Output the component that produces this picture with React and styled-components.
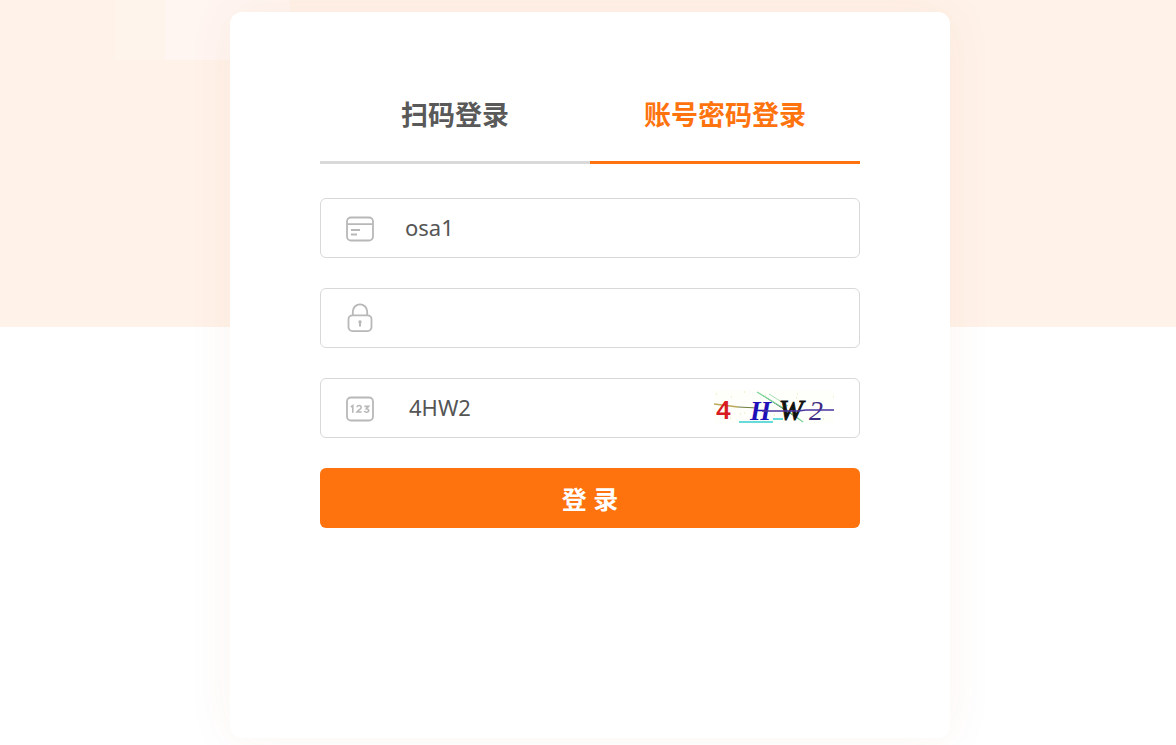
import React, { useState } from 'react';
import styled, { createGlobalStyle } from 'styled-components';

const GlobalStyle = createGlobalStyle`
  *, *::before, *::after { box-sizing: border-box; }
  body {
    margin: 0;
    background: #fff;
    color: #555;
    font-family: "Noto Sans", "Noto Sans CJK SC", sans-serif;
  }
  button, input { font-family: inherit; }
`;

const Page = styled.main`
  display: flex;
  justify-content: center;
  min-height: 100vh;
  padding: 12px 16px 7px 20px;
  overflow: hidden;
  background:
    linear-gradient(90deg, #fff4eb 50px, #fff5f1 50px) 115px 0 / 175px 60px no-repeat,
    linear-gradient(#fff2e9, #fff2e9) 0 0 / 100% 327px no-repeat;
`;

const Card = styled.section`
  width: 100%;
  max-width: 720px;
  min-height: 726px;
  padding: 56px 90px;
  border-radius: 12px;
  background: #fff;
  box-shadow: 0 0 50px rgba(190, 90, 30, 0.06);
`;

const Tabs = styled.div`
  display: flex;
  margin-bottom: 34px;
`;

const Tab = styled.button`
  flex: 1;
  height: 96px;
  padding: 0 0 2px;
  border: 0;
  border-bottom: 3px solid ${({ $active }) => ($active ? '#ff730f' : '#d9d9d9')};
  background: none;
  color: ${({ $active }) => ($active ? '#ff730f' : '#595959')};
  font-size: 27px;
  font-weight: 700;
  font-family: "Noto Sans CJK SC", sans-serif;
  line-height: 40px;
  cursor: pointer;
`;

const Form = styled.form`
  display: flex;
  flex-direction: column;
  gap: 30px;
`;

const Field = styled.label`
  display: flex;
  align-items: center;
  gap: 31px;
  height: 60px;
  padding: 0 25px;
  border: 1px solid #d9d9d9;
  border-radius: 6px;
  background: #fff;

  svg { flex: none; }
`;

const TextInput = styled.input`
  flex: 1;
  min-width: 0;
  height: 40px;
  padding: 0 0 2px ${({ $indent }) => $indent || 0}px;
  border: 0;
  outline: 0;
  background: transparent;
  color: #555;
  font-size: 22px;
`;

const CaptchaButton = styled.button`
  display: flex;
  padding: 0;
  border: 0;
  background: none;
  cursor: pointer;
`;

const Submit = styled.button`
  height: 60px;
  padding: 2px 0 0;
  border: 0;
  border-radius: 6px;
  background: #ff730f;
  color: #fff;
  font-size: 25px;
  font-weight: 700;
  line-height: 36px;
  cursor: pointer;
`;

const FieldIcon = ({ children }) => (
  <svg width="28" height="32" viewBox="0 0 28 32" fill="none" stroke="#b8b8b8" strokeWidth="1.8" aria-hidden="true">
    {children}
  </svg>
);

const CardIcon = () => (
  <FieldIcon>
    <rect x="1" y="5.5" width="26" height="23" rx="4" />
    <path d="M1 12.2h26M5 18h9M5 22.5h6" />
  </FieldIcon>
);

const LockIcon = () => (
  <FieldIcon>
    <rect x="2.5" y="13.3" width="23" height="15.8" rx="4" />
    <path d="M6.8 13.3V9.6a7.2 7.2 0 0 1 14.4 0v3.7" />
    <path d="M14 18.6v5.8" strokeWidth="2" />
    <path d="M12.4 19.8h3.2" strokeWidth="2" />
  </FieldIcon>
);

const CodeIcon = () => (
  <FieldIcon>
    <rect x="1" y="5.5" width="26" height="23" rx="4" />
    <path d="M4.8 15l2-1.4v7.2M11 15.2c.2-2.2 4.4-2.2 4.2.2 0 1.6-2.6 2.6-4.2 4.6h4.6M18.4 14.4h4.2l-2.2 2.4c3.2 0 2.8 3.4.2 3.4-1.2 0-2-.4-2.4-1.2" strokeWidth="1.6" />
  </FieldIcon>
);

const Captcha = () => (
  <svg width="120" height="40" viewBox="0 0 120 40" fontFamily="Liberation Serif, serif" role="img" aria-label="4HW2">
    <rect y="2" width="120" height="33" fill="#fefefa" />
    <path d="M2 6h1m14 3h1m12-5h1m20 3h1m8 20h1m22-21h1m-68 24h1m13-5h1m51-15h1m17 6h1m8 15h1m9-22h1m-94 17h1" stroke="#dfe8a8" strokeWidth="1" />
    <path d="M0 16l24 3" stroke="#bba858" strokeWidth="1.4" />
    <path d="M24 19l20 1" stroke="#6f7f3e" strokeWidth="1.2" />
    <path d="M43 4l31 19 15 11" stroke="#7bd69a" strokeWidth="1.2" />
    <path d="M55 6l19 12" stroke="#a6dfb4" strokeWidth="1" />
    <path d="M25 34h34M59 31h10" stroke="#35cfd2" strokeWidth="1.5" fill="none" />
    <text x="2" y="31" fontSize="26" fontFamily="Noto Sans, sans-serif" fontWeight="600" fill="#d81b22">4</text>
    <text x="36" y="32" fontSize="27" fontWeight="700" fontStyle="italic" fill="#1e10b8">H</text>
    <text x="65" y="32" fontSize="29" fontStyle="italic" fill="#111" stroke="#111" strokeWidth="1">W</text>
    <text x="95" y="32" fontSize="28" fontStyle="italic" fill="#3c2a82">2</text>
    <path d="M48 23h36l8-1h28" stroke="#4935a0" strokeWidth="1.6" fill="none" />
  </svg>
);

export default function App() {
  const [tab, setTab] = useState('account');
  return (
    <>
      <GlobalStyle />
      <Page>
        <Card>
          <Tabs role="tablist">
            <Tab type="button" role="tab" aria-selected={tab === 'scan'} $active={tab === 'scan'} onClick={() => setTab('scan')}>
              扫码登录
            </Tab>
            <Tab type="button" role="tab" aria-selected={tab === 'account'} $active={tab === 'account'} onClick={() => setTab('account')}>
              账号密码登录
            </Tab>
          </Tabs>
          <Form onSubmit={(e) => e.preventDefault()}>
            <Field>
              <CardIcon />
              <TextInput type="text" name="account" aria-label="账号" defaultValue="osa1" />
            </Field>
            <Field>
              <LockIcon />
              <TextInput type="password" name="password" aria-label="密码" />
            </Field>
            <Field>
              <CodeIcon />
              <TextInput type="text" name="captcha" aria-label="验证码" defaultValue="4HW2" $indent={4} />
              <CaptchaButton type="button">
                <Captcha />
              </CaptchaButton>
            </Field>
            <Submit type="submit">登 录</Submit>
          </Form>
        </Card>
      </Page>
    </>
  );
}
